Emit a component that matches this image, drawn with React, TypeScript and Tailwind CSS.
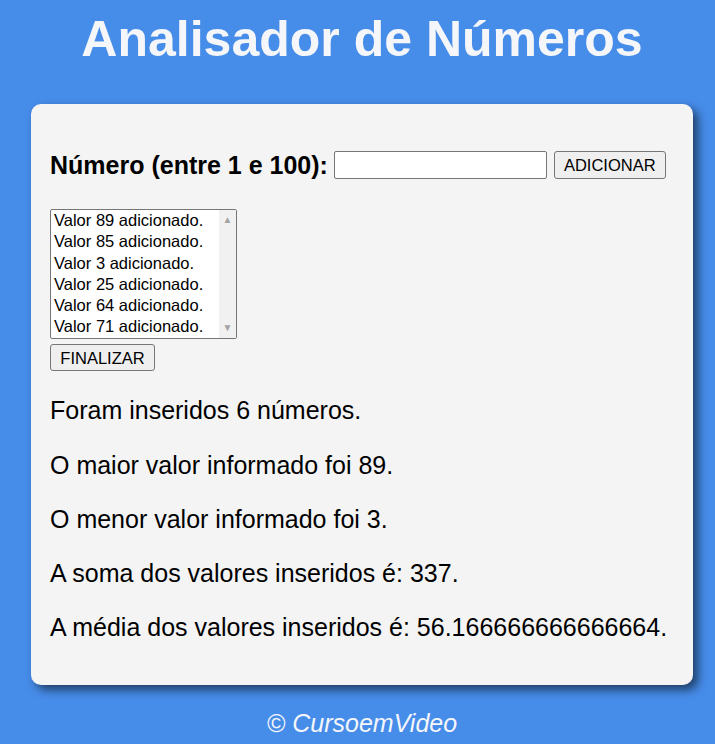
const valores = [89, 85, 3, 25, 64, 71];

export default function App() {
    const soma = valores.reduce((a, b) => a + b, 0);
    const media = soma / valores.length;

    return (
        <div className="min-h-screen bg-[#468ce9] pl-[9px] font-['Liberation_Sans',Arial,sans-serif] text-black overflow-hidden">
            <header className="pt-[11px] pb-[35px] text-center">
                <h1 className="text-[50px] font-bold leading-[57.5px] text-[#f4f6fa]">Analisador de Números</h1>
            </header>

            <section className="mx-auto w-[662px] rounded-[10px] bg-[#f4f4f4] px-[19px] pt-[19px] pb-[17px] shadow-[5px_5px_10px_rgba(0,0,0,0.55)]">
                <div className="mt-[28px] flex items-center text-[25px] leading-[28.75px]">
                    <label className="font-bold">Número (entre 1 e 100):</label>
                    <input
                        type="text"
                        className="ml-[6px] h-[28px] w-[213px] rounded-[2px] border border-[#767676] bg-white"
                    />
                    <button className="ml-[7px] h-[28px] rounded-[3px] border border-[#767676] bg-[#efefef] px-[9px] text-[16.5px] leading-none">
                        ADICIONAR
                    </button>
                </div>

                {/* lista */}
                <div className="mt-[30px] flex h-[130px] w-[187px] rounded-[2px] border border-[#767676] bg-white">
                    <div className="flex-1 pl-[3px] text-[16.5px] leading-[21.2px] whitespace-nowrap">
                        {valores.map((v) => (
                            <div key={v}>Valor {v} adicionado.</div>
                        ))}
                    </div>
                    <div className="flex w-[17px] flex-col items-center justify-between bg-[#f1f1f1] py-[5px] text-[10px] leading-none text-[#a3a3a3]">
                        <span>▲</span>
                        <span>▼</span>
                    </div>
                </div>
                <button className="mt-[5px] h-[27px] w-[105px] rounded-[3px] border border-[#767676] bg-[#efefef] text-[16.5px] leading-none">
                    FINALIZAR
                </button>

                <div className="text-[25px] leading-[29.25px]">
                    <p className="my-[25px]">Foram inseridos {valores.length} números.</p>
                    <p className="my-[25px]">O maior valor informado foi {Math.max(...valores)}.</p>
                    <p className="my-[25px]">O menor valor informado foi {Math.min(...valores)}.</p>
                    <p className="my-[25px]">A soma dos valores inseridos é: {soma}.</p>
                    <p className="my-[25px]">A média dos valores inseridos é: {media}.</p>
                </div>
            </section>

            <footer className="pt-[24px] pb-[20px] text-center text-[25px] italic leading-[28.75px] text-[#f4f6fa]">
                <p>© CursoemVideo</p>
            </footer>
        </div>
    );
}
